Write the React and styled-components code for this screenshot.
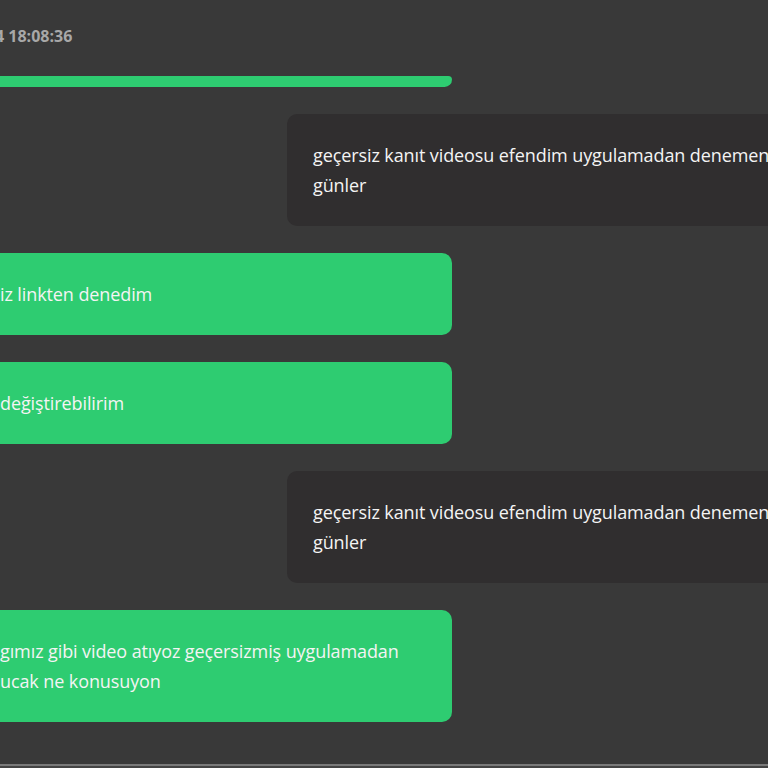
import React from 'react';
import styled, { createGlobalStyle } from 'styled-components';

const GlobalStyle = createGlobalStyle`
  html, body {
    margin: 0;
    padding: 0;
    background: #393939;
    overflow: hidden;
  }
  body {
    font-family: "Open Sans", "Noto Sans", sans-serif;
  }
`;

const Page = styled.div`
  height: 768px;
  display: flex;
  flex-direction: column;
  overflow: hidden;
`;

const Feed = styled.div`
  flex: 1;
  margin-left: -40px;
  width: 1100px;
  padding-top: 26px;
  display: flex;
  flex-direction: column;
  gap: 27px;
`;

const Stamp = styled.div`
  padding-left: 35px;
  font-size: 16px;
  line-height: 20px;
  font-weight: 700;
  color: #a8a8a8;
  letter-spacing: 0;
`;

const Progress = styled.div`
  margin-top: 30px;
  width: 492px;
  height: 11px;
  background: #2ecc71;
  border-radius: 0 5px 10px 0;
`;

const Bubble = styled.div`
  box-sizing: border-box;
  width: ${p => (p.$mine ? '620px' : '492px')};
  margin-left: ${p => (p.$mine ? '327px' : '0')};
  padding: 26px 26px 26px ${p => (p.$mine ? '26px' : '40px')};
  background: ${p => (p.$mine ? '#302e2f' : '#2ecc71')};
  border-radius: 10px;
  color: #f4f4f4;
  font-size: 18px;
  line-height: 30px;
  letter-spacing: -0.1px;
  white-space: pre;
  overflow: hidden;
`;

const Composer = styled.div`
  height: 2px;
  border-top: 2px solid #7a7a7a;
  background: #444;
`;

const messages = [
  { mine: true, text: 'geçersiz kanıt videosu efendim uygulamadan denemenizi rica ederiz\ngünler' },
  { mine: false, text: 'iz linkten denedim' },
  { mine: false, text: 'değiştirebilirim' },
  { mine: true, text: 'geçersiz kanıt videosu efendim uygulamadan denemenizi rica ederiz\ngünler' },
  { mine: false, text: 'gımız gibi video atıyoz geçersizmiş uygulamadan\nucak ne konusuyon' },
];

export default function App() {
  return (
    <Page>
      <GlobalStyle />
      <Feed>
        <div>
          <Stamp>4 18:08:36</Stamp>
          <Progress />
        </div>
        {messages.map((m, i) => (
          <Bubble key={i} $mine={m.mine}>{m.text}</Bubble>
        ))}
      </Feed>
      <Composer />
    </Page>
  );
}
